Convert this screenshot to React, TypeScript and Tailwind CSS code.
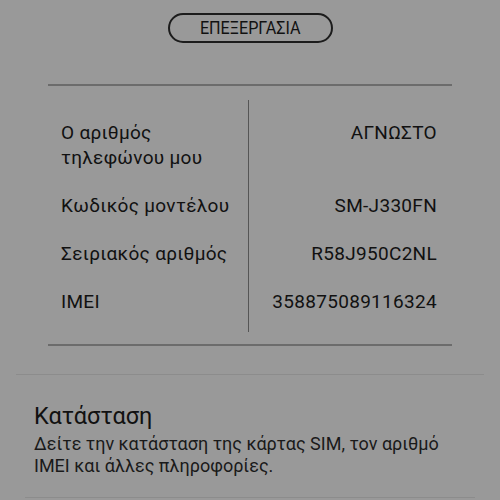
export default function App() {
  const rows: [string, string][] = [
    ['Ο αριθμός\nτηλεφώνου μου', 'ΑΓΝΩΣΤΟ'],
    ['Κωδικός μοντέλου', 'SM-J330FN'],
    ['Σειριακός αριθμός', 'R58J950C2NL'],
    ['IMEI', '358875089116324'],
  ];

  return (
    <div
      className="w-[500px] h-[500px] overflow-hidden bg-[#999999] text-[#111111] flex flex-col"
      style={{ fontFamily: 'Roboto, "Noto Sans", sans-serif' }}
    >
      <div className="flex justify-center pt-[13px]">
        <div className="w-[165px] h-[30px] rounded-full border-2 border-[#1c1c1c] flex items-center justify-center text-[19px]">
          <span className="inline-block scale-x-[0.85]">ΕΠΕΞΕΡΓΑΣΙΑ</span>
        </div>
      </div>

      <div className="mx-[48px] mt-[41px] border-t-2 border-b-2 border-[#6c6c6c] pt-[14px] pb-[12px] flex">
        <div className="w-[201px] border-r border-[#555555] pt-[20px] pb-[18px] pl-[13px] flex flex-col gap-[23px] text-[19px] leading-[25px] tracking-[0.3px]">
          {rows.map(([label]) => (
            <div key={label} className="whitespace-pre-line">
              {label}
            </div>
          ))}
        </div>
        <div className="flex-1 pt-[20px] pr-[15px] flex flex-col gap-[23px] text-[19px] leading-[25px] tracking-[0.3px] text-right">
          {rows.map(([label, value]) => (
            <div key={value} className={label.includes('\n') ? 'h-[50px]' : ''}>
              {value}
            </div>
          ))}
        </div>
      </div>

      <div className="mx-[16px] mt-[28px] h-px bg-[#8c8c8c]" />

      <div className="px-[34px] pt-[27px]">
        <div className="text-[23.5px] leading-[28px]">Κατάσταση</div>
        <div className="mt-[3px] text-[18px] leading-[22px] text-[#1a1a1a]">
          Δείτε την κατάσταση της κάρτας SIM, τον αριθμό
          <br />
          IMEI και άλλες πληροφορίες.
        </div>
      </div>

      <div className="mx-[25px] mt-[20px] h-px bg-[#8c8c8c]" />
    </div>
  );
}
